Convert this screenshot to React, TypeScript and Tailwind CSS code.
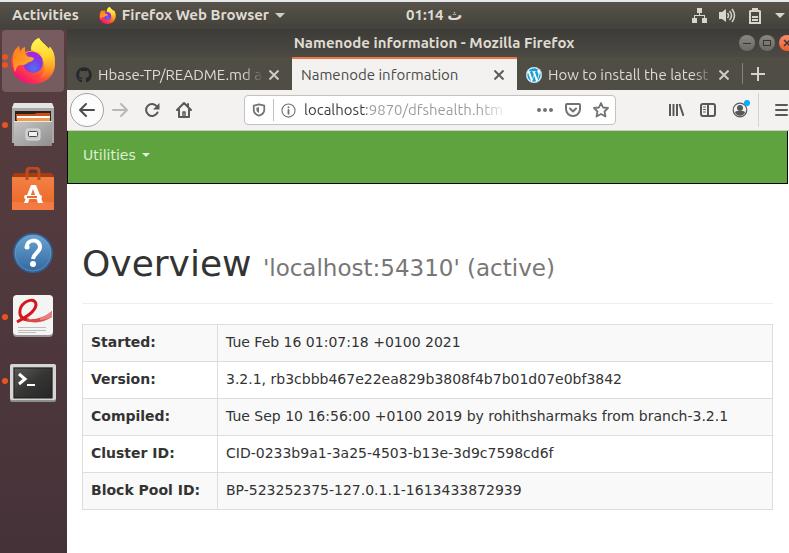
import type { ReactNode } from "react";
import { FaGithub, FaWordpress } from "react-icons/fa";

const uiFont = "font-['Ubuntu','Noto_Sans','DejaVu_Sans',sans-serif]";
const pageFont = "font-['DejaVu_Sans',sans-serif]";

const rows: [string, string][] = [
  ["Started:", "Tue Feb 16 01:07:18 +0100 2021"],
  ["Version:", "3.2.1, rb3cbbb467e22ea829b3808f4b7b01d07e0bf3842"],
  ["Compiled:", "Tue Sep 10 16:56:00 +0100 2019 by rohithsharmaks from branch-3.2.1"],
  ["Cluster ID:", "CID-0233b9a1-3a25-4503-b13e-3d9c7598cd6f"],
  ["Block Pool ID:", "BP-523252375-127.0.1.1-1613433872939"],
];

function FirefoxLogo({ id, size }: { id: string; size: number }) {
  return (
    <svg width={size} height={size} viewBox="0 0 46 46" aria-hidden="true" className="shrink-0">
      <defs>
        <linearGradient id={`${id}-body`} x1="0.85" y1="0.05" x2="0.2" y2="0.95">
          <stop offset="0" stopColor="#fff44f" />
          <stop offset="0.3" stopColor="#ffb02e" />
          <stop offset="0.55" stopColor="#ff6a2a" />
          <stop offset="0.8" stopColor="#ff3150" />
          <stop offset="1" stopColor="#e5127d" />
        </linearGradient>
        <linearGradient id={`${id}-tail`} x1="0.4" y1="0" x2="0.6" y2="1">
          <stop offset="0" stopColor="#fff44f" />
          <stop offset="0.5" stopColor="#ffd52e" />
          <stop offset="1" stopColor="#ff8a1f" stopOpacity="0.2" />
        </linearGradient>
        <linearGradient id={`${id}-head`} x1="0" y1="0" x2="1" y2="1">
          <stop offset="0" stopColor="#ff7a1a" />
          <stop offset="1" stopColor="#ffb42a" />
        </linearGradient>
        <radialGradient id={`${id}-globe`} cx="0.55" cy="0.75" r="0.75">
          <stop offset="0" stopColor="#5a6df0" />
          <stop offset="0.5" stopColor="#7542e5" />
          <stop offset="1" stopColor="#a92be0" />
        </radialGradient>
      </defs>
      <path
        d="M29 0C31 4 36 7 39 11c0-1 0-2 1-2 4 4 5 9 5 17 0 11-9 20-22 20C10 46 1 37 1 25 1 19 3 15 5 12l4-4 1 6c1-3 3-4 5-5l0 5c2-1 4-1 6-1 0-6 3-11 8-13z"
        fill={`url(#${id}-body)`}
      />
      <path
        d="M29 0c2 4 7 7 10 11 0-1 0-2 1-2 5 6 6 16 3 23-3 5-8 8-13 8 4-5 6-12 3-18-1-3-3-5-5-6l4 1c-2-3-11-4-11-6 0-5 4-10 8-11z"
        fill={`url(#${id}-tail)`}
      />
      <circle cx="23" cy="25" r="10" fill={`url(#${id}-globe)`} />
      <path d="M15 16c5-4 14-3 18 6-4-3-7-2-8-1-2-3-5-4-10-5z" fill="#9a2be2" />
      <path d="M5 12l4-4 1 6c1-3 3-4 5-5v6c1 3 3 4 6 4l3 1c0 2-2 3-4 4-3 0-3 3-7 3-2 0-5 0-6 2l-2 5C2 26 2 18 5 12z" fill={`url(#${id}-head)`} />
    </svg>
  );
}

function FilesIcon() {
  return (
    <svg width="42" height="44" viewBox="0 0 42 44" aria-hidden="true">
      <defs>
        <linearGradient id="files-front" x1="0" y1="0" x2="1" y2="1">
          <stop offset="0" stopColor="#c6c6c6" />
          <stop offset="1" stopColor="#8e8e8e" />
        </linearGradient>
      </defs>
      <path d="M2 0h38l2 5v35H0V5z" fill="#a9a9a9" />
      <path d="M2 0h38l2 5H0z" fill="#e4e4e4" />
      <rect x="3" y="8" width="36" height="10" fill="#2a211d" />
      <path d="M4 11h18l3-1h13v7H4z" fill="#c9501a" />
      <path d="M5 13h33v2H5z" fill="#fff" />
      <path d="M5 15h33v3H5z" fill="#f29a4c" />
      <rect x="2" y="18" width="38" height="25" rx="1" fill="url(#files-front)" />
      <path d="M2 18.500h38" stroke="#e8e8e8" />
      <rect x="14" y="26" width="14" height="11" rx="2" fill="#c9c9c9" stroke="#dedede" />
      <rect x="16.500" y="28.500" width="9" height="5" rx="1" fill="#f0f0f0" stroke="#4a4a4a" />
    </svg>
  );
}

function SoftwareIcon() {
  return (
    <svg width="42" height="44" viewBox="0 0 42 44" aria-hidden="true">
      <defs>
        <linearGradient id="bag" x1="0" y1="0" x2="0" y2="1">
          <stop offset="0" stopColor="#f08144" />
          <stop offset="0.75" stopColor="#ee6c2c" />
          <stop offset="0.76" stopColor="#f37b42" />
          <stop offset="1" stopColor="#f27a45" />
        </linearGradient>
      </defs>
      <path d="M2 6h38l2 4H0z" fill="#a83b10" />
      <rect y="10" width="42" height="33" fill="url(#bag)" />
      <path d="M15 13V5q0-4 4-4h4q4 0 4 4v8" fill="none" stroke="#c14a1b" strokeWidth="3" />
      <path d="M12 36L19 18h5l7 18h-5l-5-14-5 14z" fill="#fff" />
      <rect x="12" y="28" width="18" height="4" rx="2" fill="#fff" />
      <path d="M15 30h10" stroke="#ee6c2c" strokeWidth="2" />
    </svg>
  );
}

function HelpIcon() {
  return (
    <svg width="42" height="42" viewBox="0 0 42 42" aria-hidden="true">
      <defs>
        <linearGradient id="help" x1="0" y1="0" x2="0" y2="1">
          <stop offset="0" stopColor="#6aa5d3" />
          <stop offset="1" stopColor="#3267a0" />
        </linearGradient>
      </defs>
      <circle cx="21" cy="21" r="19" fill="url(#help)" stroke="#315d8d" strokeWidth="2" />
      <circle cx="21" cy="21" r="18" fill="none" stroke="#86b6dc" strokeOpacity="0.5" />
      <path d="M15 15c-1-8 13-9 13 0 0 5-6 6-7 12" fill="none" stroke="#fff" strokeWidth="4" />
      <circle cx="15" cy="15" r="2.500" fill="#fff" />
      <circle cx="21" cy="32" r="3" fill="#fff" />
    </svg>
  );
}

function PdfIcon() {
  return (
    <svg width="42" height="44" viewBox="0 0 42 44" aria-hidden="true">
      <rect x="1" y="1" width="40" height="41" rx="4" fill="#9a9593" />
      <rect x="1" y="0" width="40" height="40" rx="4" fill="#f4f4f4" />
      <path d="M5 27C14 22 23 17 24 10c0-8-11-5-15 2-3 7 0 13 8 13" fill="none" stroke="#d4171c" strokeWidth="3" />
      <path d="M15 24c9 1 18-2 25-8v6c-8 5-16 7-26 4z" fill="#d94a4a" />
      <path d="M28 23c5-2 9-4 12-7v6c-4 2-8 3-12 3z" fill="#e88080" />
      <path d="M6 32.500h28M6 35.500h28M6 37.500h18" stroke="#bdbdbd" />
    </svg>
  );
}

function TerminalIcon() {
  return (
    <svg width="46" height="38" viewBox="0 0 46 38" aria-hidden="true" className="mt-1">
      <defs>
        <linearGradient id="term" x1="0" y1="0" x2="1" y2="1">
          <stop offset="0" stopColor="#5a5a58" />
          <stop offset="0.5" stopColor="#353534" />
          <stop offset="1" stopColor="#252525" />
        </linearGradient>
      </defs>
      <rect y="1" width="46" height="37" rx="2" fill="#8d8f8d" />
      <rect width="46" height="36" rx="2" fill="#d5d5d5" />
      <rect x="3" y="3" width="40" height="31" fill="#a9a9a9" />
      <rect x="4" y="4" width="38" height="30" fill="url(#term)" stroke="#1e1e1e" />
      <path d="M9 10l6 5-6 5" fill="none" stroke="#fff" strokeWidth="3" />
      <path d="M17 21h8" stroke="#fff" strokeWidth="2" />
    </svg>
  );
}

function DockItem({ label, dots = 0, active = false, children }: { label: string; dots?: number; active?: boolean; children: ReactNode }) {
  return (
    <button aria-label={label} className="relative flex h-16 w-full items-center justify-center py-px pr-[3px] pl-0.5">
      <span className={`flex h-full w-full items-center justify-center rounded ${active ? "bg-[#765c5e]" : ""}`}>{children}</span>
      <span className="absolute inset-y-0 left-0.5 flex flex-col justify-center gap-0.5">
        {Array.from({ length: dots }, (_, i) => (
          <span key={i} className="size-1.5 rounded-full bg-[#e95420]" />
        ))}
      </span>
    </button>
  );
}

function CloseGlyph({ color }: { color: string }) {
  return (
    <svg width="10" height="10" viewBox="0 0 10 10" stroke={color} strokeWidth="2" aria-hidden="true">
      <path d="M.5.5l9 9M9.500.5l-9 9" />
    </svg>
  );
}

function Tab({ title, icon, active = false }: { title: string; icon?: ReactNode; active?: boolean }) {
  return (
    <div
      className={`flex w-[225px] shrink-0 items-center gap-1.5 border-t-2 pr-[13px] pl-[9px] ${
        active ? "border-[#f07746] bg-[#f4f2f1] text-[#4a4a4a]" : "border-transparent text-[#dedbd2]"
      }`}
    >
      {icon}
      <button
        role="tab"
        aria-selected={active}
        className={`min-w-0 flex-1 text-left text-[15px] leading-5 whitespace-nowrap ${
          active ? "" : "[mask-image:linear-gradient(to_right,black_88%,transparent)]"
        }`}
      >
        {title}
      </button>
      <button aria-label={`Close ${title}`}>
        <CloseGlyph color={active ? "#5c5c5c" : "#cfccc4"} />
      </button>
    </div>
  );
}

function WindowButton({ label, close = false, children }: { label: string; close?: boolean; children: ReactNode }) {
  return (
    <button
      aria-label={label}
      className={`flex size-4 shrink-0 items-center justify-center rounded-full ${
        close ? "bg-linear-to-b from-[#f58d6c] to-[#ee5b2b]" : "bg-linear-to-b from-[#8a8780] to-[#6b6962]"
      }`}
    >
      <svg width="10" height="10" viewBox="0 0 10 10" fill="none" stroke="#37352f" aria-hidden="true">
        {children}
      </svg>
    </button>
  );
}

function ToolIcon({ label, children, color = "#58585a", size = 16 }: { label: string; children: ReactNode; color?: string; size?: number }) {
  return (
    <button aria-label={label} className="shrink-0">
      <svg width={size} height={size} viewBox="0 0 16 16" fill="none" stroke={color} strokeWidth="2" strokeLinecap="round" strokeLinejoin="round" aria-hidden="true">
        {children}
      </svg>
    </button>
  );
}

function TopBar() {
  return (
    <header className="flex h-[29px] shrink-0 items-center border-t-2 border-[#e6e9ea] bg-linear-to-b from-[#57534a] to-[#43413b] pl-3 text-[15px] font-semibold text-[#dfdbd2]">
      <button>Activities</button>
      <button className="ml-5 flex items-center gap-1.5 whitespace-nowrap">
        <FirefoxLogo id="panel-fx" size={17} />
        Firefox Web Browser
        <svg width="10" height="5" viewBox="0 0 10 5" fill="#d0cdc5" aria-hidden="true"><path d="M0 0h10L5 5z" /></svg>
      </button>
      <time dir="ltr" className="ml-[121px] whitespace-nowrap">01:14 ث</time>
      <button aria-label="System menu" className="ml-auto flex items-center pr-1 text-[#d8d5ce]">
        <svg width="15" height="15" viewBox="0 0 15 15" fill="currentColor" aria-hidden="true">
          <path d="M5 0h5v5H8v2h5v3h2v5h-5v-5h2V8H3v2h2v5H0v-5h2V7h5V5H5z" />
        </svg>
        <svg className="ml-3" width="17" height="15" viewBox="0 0 17 15" fill="none" stroke="currentColor" strokeWidth="1.500" aria-hidden="true">
          <path d="M0 4h3l4-3v13l-4-3H0z" fill="currentColor" stroke="none" />
          <path d="M8.500 5q2 2.500 0 5M10.500 3q4 4.500 0 9M13 1q5 6.500 0 13" />
        </svg>
        <svg className="ml-[13px]" width="12" height="16" viewBox="0 0 12 16" fill="currentColor" aria-hidden="true">
          <path fillRule="evenodd" d="M3 0h6v2h2l1 1v13H0V3l1-1h2zM2 4v10h8V4zM3 8h6v2H3zm0 3h6v2H3z" />
        </svg>
        <svg className="ml-3.5" width="10" height="5" viewBox="0 0 10 5" fill="currentColor" aria-hidden="true"><path d="M0 0h10L5 5z" /></svg>
      </button>
    </header>
  );
}

function Toolbar() {
  return (
    <div className="flex h-[41px] shrink-0 items-center overflow-hidden border-b border-[#cfcbc8] bg-[#f4f2f1] pl-[3px]">
      <button aria-label="Back" className="flex size-[34px] shrink-0 items-center justify-center rounded-full border border-[#a5a3a2] bg-[#fcfcfc]">
        <svg width="16" height="16" viewBox="0 0 16 16" fill="none" stroke="#4c4c4e" strokeWidth="2" strokeLinecap="round" strokeLinejoin="round" aria-hidden="true">
          <path d="M15 8H1M7 2L1 8l6 6" />
        </svg>
      </button>
      <div className="ml-2 flex gap-4">
        <ToolIcon label="Forward" color="#b9b7b6"><path d="M1 8h14M9 2l6 6-6 6" /></ToolIcon>
        <ToolIcon label="Reload">
          <path d="M13 4.500A6 6 0 1 0 13.500 10.500" />
          <path d="M15.500 1v6.500H9z" fill="#58585a" stroke="none" />
        </ToolIcon>
        <ToolIcon label="Home">
          <path d="M1 8l7-7 7 7M3 7v8h10V7" />
          <path d="M12 2v3" />
          <path d="M7 14v-4h2v4" strokeWidth="1.500" />
        </ToolIcon>
      </div>
      <div className="ml-[52px] flex h-[30px] min-w-0 flex-1 items-center rounded border border-[#c3c0be] bg-white pr-1.5 pl-[7px]">
        <ToolIcon label="Tracking protection" color="#737375" size={14}>
          <path d="M8 1.500L14 3v5c0 3-3 5.500-6 6.500C5 13.500 2 11 2 8V3z" />
          <path d="M8 4.500v7c-2-1-3-2-3-4v-2z" fill="#737375" stroke="none" />
        </ToolIcon>
        <span className="ml-[7px] h-[22px] w-px shrink-0 bg-[#c3c0be]" />
        <span className="ml-[7px] flex">
          <ToolIcon label="Site information" color="#737375" size={15}>
            <circle cx="8" cy="8" r="7" strokeWidth="1.200" />
            <path d="M8 7.500v4M8 4.500v.2" />
          </ToolIcon>
        </span>
        <input
          aria-label="Address"
          defaultValue="localhost:9870/dfshealth.htm"
          className="ml-2 w-0 max-w-[204px] flex-1 bg-[linear-gradient(to_right,#38383a_62px,#9b999a_63px,#9b999a_176px,transparent_204px)] bg-clip-text text-[15px] text-transparent outline-none"
        />
        <div className="ml-auto flex items-center gap-3">
          <ToolIcon label="Page actions" color="#737375">
            <path d="M2 8h.01M8 8h.01M14 8h.01" strokeWidth="4" />
          </ToolIcon>
          <ToolIcon label="Save to Pocket" color="#737375">
            <path d="M2 2h12q1 0 1 1v4a7 7 0 0 1-14 0V3q0-1 1-1z" />
            <path d="M5 6.500l3 3 3-3" />
          </ToolIcon>
          <ToolIcon label="Bookmark this page" color="#737375">
            <path d="M8 1l2 4.500 5 .5-3.500 3.500 1 5L8 12l-4.500 2.500 1-5L1 6l5-.5z" strokeWidth="1.800" />
          </ToolIcon>
        </div>
      </div>
      <div className="ml-[52px] flex items-center gap-4">
        <ToolIcon label="Library"><path d="M2 2v12M5.500 2v12M9 2v12M11.500 2l4 12" strokeLinecap="butt" /></ToolIcon>
        <ToolIcon label="Sidebars">
          <rect x="1" y="2" width="14" height="12" rx="2" />
          <path d="M8 2v12" />
          <path d="M3.500 5h2M3.500 7.500h2M3.500 10h2" strokeWidth="1" />
        </ToolIcon>
        <span className="relative flex">
          <ToolIcon label="Account">
            <circle cx="8" cy="8" r="6.800" strokeWidth="1.200" />
            <circle cx="8" cy="6" r="3" fill="#58585a" stroke="none" />
            <path d="M3 11q0-2 2-2h6q2 0 2 2-2 3-5 3t-5-3z" fill="#58585a" stroke="none" />
          </ToolIcon>
          <span className="absolute -top-0.5 -right-0.5 size-1.5 rounded-full bg-[#00aeff]" />
        </span>
      </div>
      <span className="ml-2.5 h-[34px] w-px shrink-0 bg-[#d5d2d0]" />
      <button aria-label="Open menu" className="ml-[15px] w-[15px] shrink-0">
        <svg width="15" height="14" viewBox="0 0 15 14" stroke="#58585a" strokeWidth="2" strokeLinecap="round" aria-hidden="true">
          <path d="M2 2h11M2 7h11M2 12h11" />
        </svg>
      </button>
    </div>
  );
}

export default function App() {
  return (
    <div className={`flex min-h-screen flex-col overflow-hidden bg-white ${uiFont}`}>
      <TopBar />
      <div className="flex flex-1">
        <nav aria-label="Dock" className="w-[67px] shrink-0 bg-linear-to-b from-[#573d3e] via-[#50393d] to-[#453238]">
          <DockItem label="Firefox" dots={2} active><FirefoxLogo id="dock-fx" size={46} /></DockItem>
          <DockItem label="Files" dots={1}><FilesIcon /></DockItem>
          <DockItem label="Ubuntu Software"><SoftwareIcon /></DockItem>
          <DockItem label="Help"><HelpIcon /></DockItem>
          <DockItem label="Document Viewer" dots={1}><PdfIcon /></DockItem>
          <DockItem label="Terminal" dots={1}><TerminalIcon /></DockItem>
        </nav>

        <div className="flex min-w-0 flex-1 flex-col">
          <div className="flex h-7 items-center overflow-hidden bg-linear-to-b from-[#3c3b37] to-[#4c4a43] text-[#dfdbd2]">
            <div className="flex-1 pl-[62px] text-center text-[15px] font-bold whitespace-nowrap">Namenode information - Mozilla Firefox</div>
            <div className="flex w-[50px] shrink-0 gap-1">
              <WindowButton label="Minimize"><path d="M1 5.500h8" /></WindowButton>
              <WindowButton label="Maximize"><rect x="1.500" y="2.500" width="7" height="5" /></WindowButton>
              <WindowButton label="Close" close><path d="M2 2l6 6M8 2l-6 6" strokeWidth="1.500" /></WindowButton>
            </div>
          </div>

          <div role="tablist" className="flex h-[33px] overflow-hidden bg-[#504d45]">
            <Tab title="Hbase-TP/README.md a" icon={<FaGithub className="size-4 shrink-0 text-[#24292e]" />} />
            <Tab title="Namenode information" active />
            <Tab title="How to install the latest v" icon={<FaWordpress className="size-4 shrink-0 rounded-full bg-white text-[#1a9fd0]" />} />
            <span className="my-1.5 w-px shrink-0 bg-[#85827a]" />
            <button aria-label="New tab" className="ml-2 shrink-0">
              <svg width="14" height="14" viewBox="0 0 14 14" stroke="#d6d3cb" strokeWidth="2" aria-hidden="true"><path d="M7 0v14M0 7h14" /></svg>
            </button>
          </div>

          <Toolbar />

          <main className={`text-sm leading-5 text-[#333] ${pageFont}`}>
            <div className="mr-px flex h-[53px] items-center border border-t-0 border-[#080808] bg-[#5fa33e] px-[15px] pb-1">
              <button className="flex items-center gap-1.5 text-[#dcf0d3]">
                Utilities
                <svg width="8" height="4" viewBox="0 0 8 4" fill="currentColor" aria-hidden="true"><path d="M0 0h8L4 4z" /></svg>
              </button>
            </div>
            <div className="px-[15px] pt-[60px] pr-4">
              <h1 className="border-b border-[#eee] pb-[19px] text-4xl leading-10">
                Overview <small className="text-[23px] leading-6 text-[#777]">'localhost:54310' (active)</small>
              </h1>
              <table className="mt-5 w-full border-collapse border border-[#ddd]">
                <tbody>
                  {rows.map(([name, value]) => (
                    <tr key={name} className="odd:bg-[#f9f9f9]">
                      <th scope="row" className="w-[135px] border border-[#ddd] px-2 pt-[7px] pb-[9px] text-left font-bold whitespace-nowrap">{name}</th>
                      <td className="border border-[#ddd] px-2 pt-[7px] pb-[9px]">{value}</td>
                    </tr>
                  ))}
                </tbody>
              </table>
            </div>
          </main>
        </div>
      </div>
    </div>
  );
}
